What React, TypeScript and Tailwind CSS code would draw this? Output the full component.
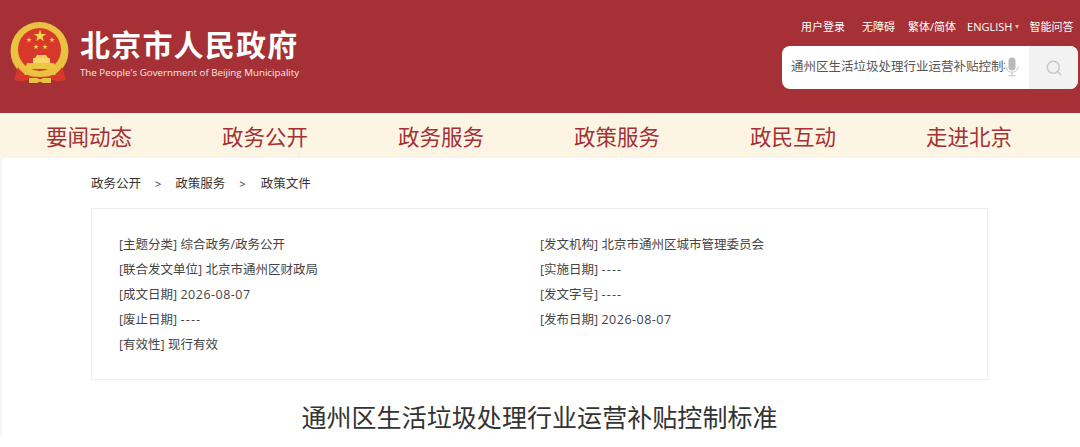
import React from "react";
import { Search } from "lucide-react";

const navItems = ["要闻动态", "政务公开", "政务服务", "政策服务", "政民互动", "走进北京"];

const leftMeta = [
  ["[主题分类]", "综合政务/政务公开"],
  ["[联合发文单位]", "北京市通州区财政局"],
  ["[成文日期]", "2026-08-07"],
  ["[废止日期]", "----"],
  ["[有效性]", "现行有效"],
];

const rightMeta = [
  ["[发文机构]", "北京市通州区城市管理委员会"],
  ["[实施日期]", "----"],
  ["[发文字号]", "----"],
  ["[发布日期]", "2026-08-07"],
];

// five pointed star around a centre
const starPoints = (cx: number, cy: number, r: number) =>
  Array.from({ length: 10 }, (_, i) => {
    const radius = i % 2 === 0 ? r : r * 0.4;
    const angle = -Math.PI / 2 + (i * Math.PI) / 5;
    return `${(cx + radius * Math.cos(angle)).toFixed(2)},${(cy + radius * Math.sin(angle)).toFixed(2)}`;
  }).join(" ");

const Emblem = () => (
  <svg width="62" height="66" viewBox="0 0 62 66" className="shrink-0">
    {/* wheat wreath */}
    <circle cx="29.5" cy="31" r="29" fill="#e8c240" />
    <circle cx="29.5" cy="29.5" r="21.5" fill="#d8382c" />
    {/* stars */}
    <polygon points={starPoints(30, 16, 6.5)} fill="#f6d648" />
    <polygon points={starPoints(19, 20, 2.8)} fill="#f6d648" />
    <polygon points={starPoints(42, 20, 2.8)} fill="#f6d648" />
    <polygon points={starPoints(26, 27, 2.8)} fill="#f6d648" />
    <polygon points={starPoints(35, 27, 2.8)} fill="#f6d648" />
    {/* Tiananmen */}
    <path d="M25 38 L27 35 H36 L38 38 Z" fill="#f0cd55" />
    <rect x="23" y="38" width="17" height="5" fill="#f4d76b" />
    <path d="M17 43 H44 L46 49 H15 Z" fill="#eec540" />
    {/* ribbons */}
    <path d="M8 47 C12 54 20 57 30 57 C40 57 48 54 52 47 L56 60 C50 62 44 61 40 59 H20 C16 61 10 62 4 60 Z" fill="#d8382c" />
    <path d="M11 50 C17 46 23 51 30 51 C37 51 43 46 49 50 L45 55 H15 Z" fill="#e8c240" />
    <path d="M19 58 H27 L30 60 L33 58 H41 V63 H33 L30 61.5 L27 63 H19 Z" fill="#e8c240" />
  </svg>
);

const Mic = () => (
  <svg width="14" height="20" viewBox="0 0 14 20" fill="none">
    <rect x="3.5" y="0.5" width="7" height="13" rx="3.5" fill="#b9b9b9" />
    <path d="M1 9.5C1 13 3.5 15.2 7 15.2C10.5 15.2 13 13 13 9.5" stroke="#c4c4c4" />
    <path d="M7 15.5V18.5M3.5 18.8H10.5" stroke="#c4c4c4" />
  </svg>
);

const MetaRow = ({ label, value }: { label: string; value: string }) => (
  <div className="h-[25px] leading-[25px] whitespace-nowrap">
    {label}{" "}
    {value === "----" ? (
      <span className="tracking-[1.2px]">{value}</span>
    ) : value.startsWith("2026") ? (
      <span className="tracking-[0.5px]">{value}</span>
    ) : (
      <span>{value}</span>
    )}
  </div>
);

export default function App() {
  return (
    <div className="w-[1080px] h-[447px] overflow-hidden bg-white text-[#333] font-['Open_Sans','Noto_Sans_CJK_SC',sans-serif]">
      {/* Header */}
      <header className="h-[113px] bg-[#a53035] flex justify-between text-white">
        <div className="flex pl-[10px] pt-[20px]">
          <Emblem />
          <div className="ml-[8px] pt-[1px]">
            <div className="text-[30px] leading-[44px] font-bold tracking-[1.2px] whitespace-nowrap font-['Noto_Sans_CJK_SC',sans-serif]">
              北京市人民政府
            </div>
            <div className="text-[9.75px] leading-[14px] mt-[1px] whitespace-nowrap opacity-90">
              The People's Government of Beijing Municipality
            </div>
          </div>
        </div>

        <div className="w-[298px] pr-[2px] pt-[18px] flex flex-col">
          <div className="flex items-center h-[17px] text-[11px] leading-[17px] whitespace-nowrap pl-[19px]">
            <span>用户登录</span>
            <span className="ml-[17px]">无障碍</span>
            <span className="ml-[13px]">繁体/简体</span>
            <span className="ml-[11px]">ENGLISH</span>
            <span className="ml-[3px] w-0 h-0 border-x-[2.5px] border-x-transparent border-t-[4px] border-t-[#d9b9a0]" />
            <span className="ml-[10px]">智能问答</span>
          </div>
          <div className="mt-[11px] h-[43px] w-[296px] flex rounded-[8px] overflow-hidden bg-white">
            <div className="w-[247px] flex items-center pl-[9px] text-[#555] text-[12.5px] relative">
              <span className="w-[214px] overflow-hidden whitespace-nowrap">通州区生活垃圾处理行业运营补贴控制标准</span>
              <span className="absolute right-[10px] top-[11px]"><Mic /></span>
            </div>
            <div className="flex-1 bg-[#f2f2f2] flex items-center justify-center">
              <Search size={18} strokeWidth={2} className="text-[#c8c8c8]" />
            </div>
          </div>
        </div>
      </header>

      {/* Nav */}
      <nav className="h-[45px] bg-[#fdf5e3] flex pl-[1px]">
        {navItems.map((item) => (
          <div key={item} className="w-[176px] text-center text-[21.5px] leading-[46px] text-[#a53035] font-['Noto_Sans_CJK_SC',sans-serif]">
            {item}
          </div>
        ))}
      </nav>

      {/* Content */}
      <main className="px-[89px] w-[1079px] border-l-[2px] border-l-[#f5f5f5]">
        <div className="flex items-center h-[50px] pt-[3px] text-[12.5px]">
          <span>政务公开</span>
          <span className="mx-[14px] text-[11px]">&gt;</span>
          <span>政策服务</span>
          <span className="ml-[14px] mr-[15px] text-[11px]">&gt;</span>
          <span>政策文件</span>
        </div>

        <section className="w-[897px] h-[172px] border border-[#eeeeee] grid grid-cols-[421px_1fr] px-[27px] pt-[23px] text-[12.5px] text-[#444]">
          <div>
            {leftMeta.map(([label, value]) => (
              <MetaRow key={label} label={label} value={value} />
            ))}
          </div>
          <div>
            {rightMeta.map(([label, value]) => (
              <MetaRow key={label} label={label} value={value} />
            ))}
          </div>
        </section>

        <h1 className="w-[897px] mt-[19px] text-center text-[25px] leading-[37px] tracking-[0.06px] text-[#333] whitespace-nowrap">
          通州区生活垃圾处理行业运营补贴控制标准
        </h1>
      </main>
    </div>
  );
}
